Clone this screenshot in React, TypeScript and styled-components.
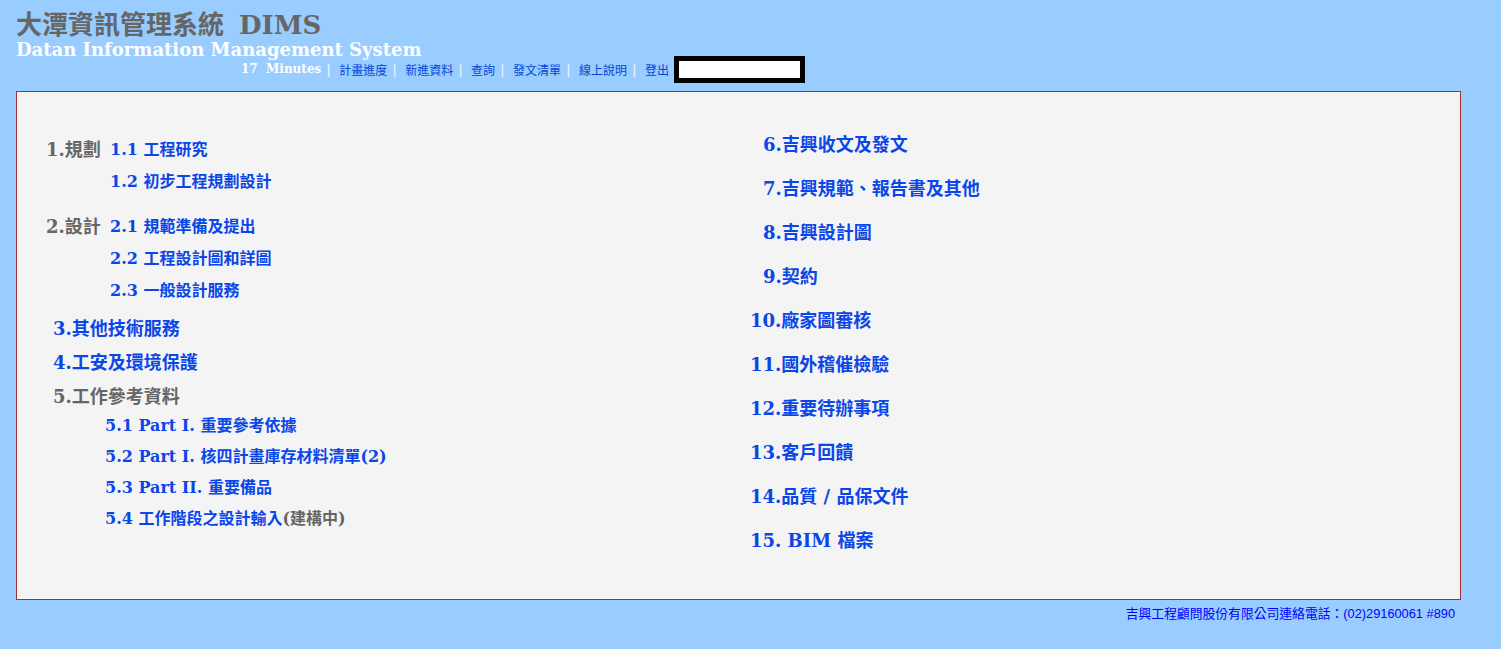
import React from "react";
import styled, { createGlobalStyle } from "styled-components";

const GlobalStyle = createGlobalStyle`
  html, body {
    margin: 0;
    padding: 0;
    background: #99ccff;
  }
  body {
    font-family: "DejaVu Serif", "Noto Sans CJK TC", serif;
  }
`;

const SERIF = `"DejaVu Serif", "Noto Sans CJK TC", serif`;
const LINK_BLUE = "#0a46e8";
const GRAY = "#666666";

const subItems = {
  plan: ["1.1 工程研究", "1.2 初步工程規劃設計"],
  design: ["2.1 規範準備及提出", "2.2 工程設計圖和詳圖", "2.3 一般設計服務"],
};

const rightItems = [
  "6.吉興收文及發文",
  "7.吉興規範、報告書及其他",
  "8.吉興設計圖",
  "9.契約",
  "10.廠家圖審核",
  "11.國外稽催檢驗",
  "12.重要待辦事項",
  "13.客戶回饋",
  "14.品質 / 品保文件",
  "15. BIM 檔案",
];

const navLinks = ["計畫進度", "新進資料", "查詢", "發文清單", "線上說明", "登出"];

const App: React.FC = () => {
  return (
    <>
      <GlobalStyle />
      <Page>
        <Header>
          <Title>
            大潭資訊管理系統<span className="title__code">DIMS</span>
          </Title>
          <Subtitle>Datan Information Management System</Subtitle>
          <NavBar>
            <Timer>17  Minutes</Timer>
            {navLinks.map((label) => (
              <React.Fragment key={label}>
                <Sep>|</Sep>
                <NavLink href="#">{label}</NavLink>
              </React.Fragment>
            ))}
            <StatusBox />
          </NavBar>
        </Header>

        <Panel>
          <LeftCol>
            <Group>
              <GroupLabel>1.規劃</GroupLabel>
              <SubList>
                {subItems.plan.map((s) => (
                  <SubLink key={s} href="#">
                    {s}
                  </SubLink>
                ))}
              </SubList>
            </Group>
            <Group $gap>
              <GroupLabel>2.設計</GroupLabel>
              <SubList>
                {subItems.design.map((s) => (
                  <SubLink key={s} href="#">
                    {s}
                  </SubLink>
                ))}
              </SubList>
            </Group>
            <MainItem href="#" $first>
              3.其他技術服務
            </MainItem>
            <MainItem href="#">4.工安及環境保護</MainItem>
            <MainLabel>5.工作參考資料</MainLabel>
            <PartList>
              <PartLink href="#">5.1 Part I. 重要參考依據</PartLink>
              <PartLink href="#">5.2 Part I. 核四計畫庫存材料清單(2)</PartLink>
              <PartLink href="#">5.3 Part II. 重要備品</PartLink>
              <PartLink href="#">
                5.4 工作階段之設計輸入<Pending>(建構中)</Pending>
              </PartLink>
            </PartList>
          </LeftCol>
          <RightCol>
            {rightItems.map((item) => (
              <RightItem key={item} href="#" $indent={/^\d\./.test(item)}>
                {item}
              </RightItem>
            ))}
          </RightCol>
        </Panel>

        <Footer>吉興工程顧問股份有限公司連絡電話：(02)29160061 #890</Footer>
      </Page>
    </>
  );
};

const Page = styled.div`
  width: 1501px;
  min-height: 649px;
  box-sizing: border-box;
  padding: 0 40px 0 16px;
`;

const Header = styled.div`
  padding-top: 10px;
  height: 91px;
  box-sizing: border-box;
`;

const Title = styled.div`
  font-family: ${SERIF};
  font-weight: bold;
  font-size: 26px;
  line-height: 30px;
  color: ${GRAY};
  .title__code {
    margin-left: 15px;
  }
`;

const Subtitle = styled.div`
  font-family: ${SERIF};
  font-weight: bold;
  font-size: 18px;
  line-height: 20px;
  color: #ffffff;
`;

const NavBar = styled.div`
  display: flex;
  align-items: center;
  margin: -5px 0 0 225px;
  height: 28px;
`;

const Timer = styled.span`
  font-family: ${SERIF};
  font-weight: bold;
  font-size: 12px;
  color: #ffffff;
  white-space: pre;
`;

const Sep = styled.span`
  font-family: ${SERIF};
  font-weight: bold;
  font-size: 13px;
  color: #e6f0ff;
  margin: 0 8.2px 0 5px;
`;

const NavLink = styled.a`
  font-family: "DejaVu Sans", "Noto Sans CJK TC", sans-serif;
  font-size: 12px;
  color: #0645d6;
  text-decoration: none;
`;

const StatusBox = styled.div`
  width: 131px;
  height: 27px;
  box-sizing: border-box;
  border: 5px solid #000000;
  background: #ffffff;
  margin-left: 5px;
`;

const Panel = styled.div`
  display: grid;
  grid-template-columns: 733px 1fr;
  height: 509px;
  box-sizing: border-box;
  border: 1px solid #a0302f;
  background: #f4f4f4;
`;

const LeftCol = styled.div`
  padding: 42px 0 0 29px;
  font-family: ${SERIF};
  font-weight: bold;
`;

const Group = styled.div<{ $gap?: boolean }>`
  display: grid;
  grid-template-columns: 64px auto;
  margin-top: ${(p) => (p.$gap ? "13px" : "0")};
`;

const GroupLabel = styled.div`
  font-size: 18px;
  line-height: 32px;
  color: ${GRAY};
`;

const SubList = styled.div`
  display: flex;
  flex-direction: column;
`;

const SubLink = styled.a`
  display: block;
  font-size: 16px;
  line-height: 32px;
  color: ${LINK_BLUE};
  text-decoration: none;
  white-space: nowrap;
`;

const PartLink = styled(SubLink)`
  line-height: 31px;
`;

const MainItem = styled.a<{ $first?: boolean }>`
  display: block;
  margin: ${(p) => (p.$first ? "5px" : "0")} 0 0 7px;
  font-size: 18px;
  line-height: 34px;
  color: ${LINK_BLUE};
  text-decoration: none;
`;

const MainLabel = styled.div`
  margin-left: 7px;
  font-size: 18px;
  line-height: 34px;
  color: ${GRAY};
`;

const PartList = styled.div`
  margin-top: -4px;
  padding-left: 59px;
`;

const Pending = styled.span`
  color: ${GRAY};
`;

const RightCol = styled.div`
  padding-top: 31px;
  font-family: ${SERIF};
  font-weight: bold;
`;

const RightItem = styled.a<{ $indent?: boolean }>`
  display: block;
  padding-left: ${(p) => (p.$indent ? "13px" : "0")};
  font-size: 18px;
  line-height: 44px;
  color: ${LINK_BLUE};
  text-decoration: none;
`;

const Footer = styled.div`
  text-align: right;
  padding: 6px 6px 0 0;
  font-family: "Liberation Sans", "Noto Sans CJK TC", sans-serif;
  font-size: 12.8px;
  line-height: 16px;
  color: #0000ff;
`;

export default App;
